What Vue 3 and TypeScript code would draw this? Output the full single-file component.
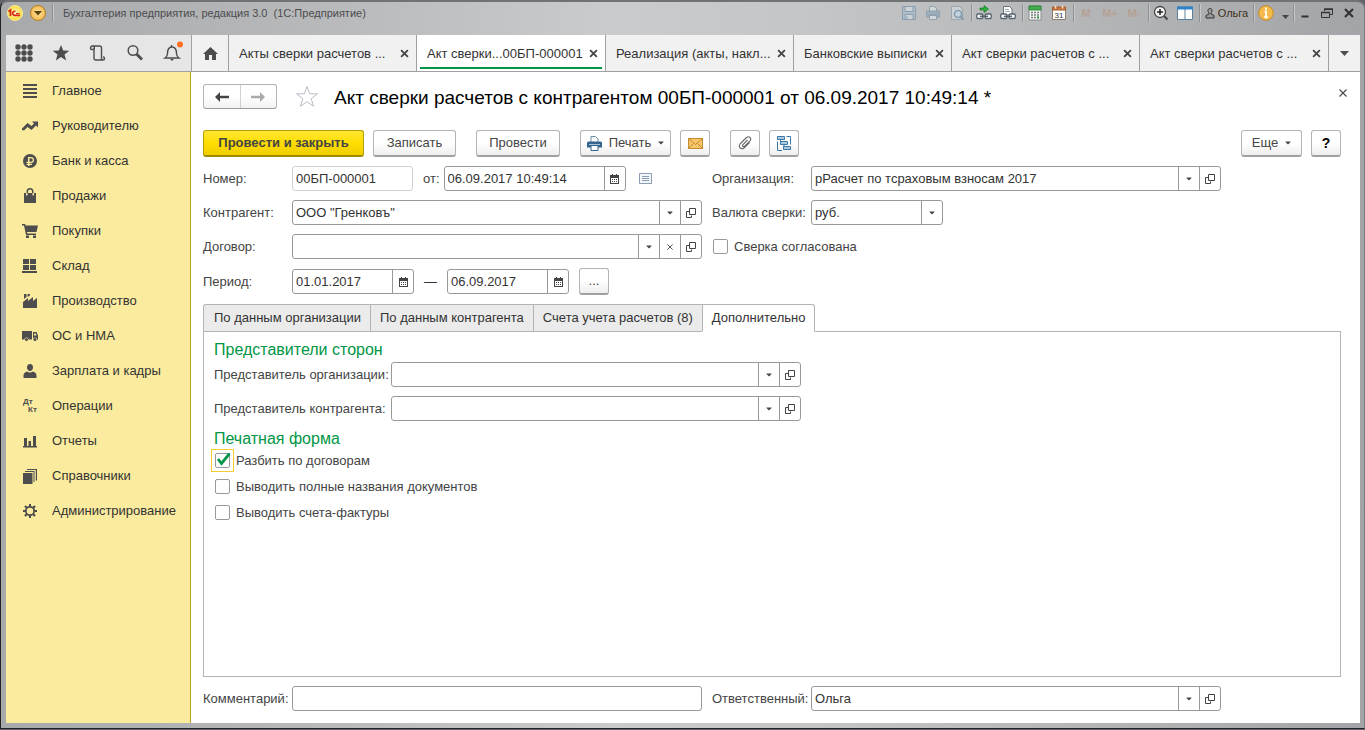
<script setup lang="ts">
import { ref } from 'vue'

interface Section { title: string; icon: string }
interface DocTab { title: string; width: number; active?: boolean }

const sections: Section[] = [
  { title: 'Главное', icon: 'M1 1h14v2H1zM1 5h14v2H1zM1 9h14v2H1zM1 13h14v2H1z' },
  { title: 'Руководителю', icon: 'M0 10.5L5.5 5l4 3L12 5.500 10 3.500h6v6l-2-2-4.500 4.500-4-3L2 12.500 0 12z' },
  { title: 'Банк и касса', icon: 'M8 1a7 7 0 1 0 0 14A7 7 0 0 0 8 1zM6 4h3a2.500 2.500 0 0 1 0 6H7.500v.8H10V12H7.500v1H6v-1H4.500v-1.200H6V10H4.500V8.800H6zM7.500 5.300v3.500H9a1.700 1.700 0 0 0 0-3.500z' },
  { title: 'Продажи', icon: 'M2 5h2v2.500h1.500V5h5v2.500H12V5h2v10H2zM4.500 5V3.500a3.500 3.500 0 0 1 7 0V5H10V3.500a2 2 0 0 0-4 0V5z' },
  { title: 'Покупки', icon: 'M0 1h3l.6 1.500H16L14.500 9H5l.3 1.500H14V12H4L2 2.500H0zM4 12.500h3v2.500H4zM11 12.500h3v2.500h-3z' },
  { title: 'Склад', icon: 'M1 1h6v5H1zM8 1h6v5H8zM1 7h6v5H1zM8 7h6v5H8zM0 13h15v2H0z' },
  { title: 'Производство', icon: 'M1 9l5-4v3l5-4v4l4-3v10H1zM2 1h2.500v3L2 6zM5.500 1H8v1.500L5.500 4z' },
  { title: 'ОС и НМА', icon: 'M0 3h10v8.500H6.500a2 2 0 0 0-4 0H0zM11 4h3.500L16 7.500v4h-1a2 2 0 0 0-4 0zM12 5.500v2h2.500l-.8-2zM3 11.500a1.500 1.500 0 1 1 3 0 1.500 1.500 0 0 1-3 0zM11.500 11.500a1.500 1.500 0 1 1 3 0 1.500 1.500 0 0 1-3 0z' },
  { title: 'Зарплата и кадры', icon: 'M8 1c2 0 3 1.400 3 3.300C11 6.500 9.700 8 8 8S5 6.500 5 4.300C5 2.400 6 1 8 1zM5 8.500Q8 10.500 11 8.500L13 9.500q1.500.8 1.500 3V15h-13v-2.500q0-2.200 1.500-3z' },
  { title: 'Операции', icon: '' },
  { title: 'Отчеты', icon: 'M1 13h14v1.500H1zM2 5h3v8H2zM6.500 8H9v5H6.500zM11 3h3v10h-3z' },
  { title: 'Справочники', icon: 'M1 5h9.500v11H1zM3 3h9.500v11h-1V4H3zM5 1h10v11.500h-1.200V2H5z' },
  { title: 'Администрирование', icon: 'M7 1h2v2l1.800.7L12.300 2.300l1.500 1.500-1.400 1.400L13 7h2v2h-2l-.7 1.800 1.500 1.500-1.500 1.500-1.500-1.500L9 13v2H7v-2l-1.800-.7-1.500 1.500-1.500-1.500 1.500-1.500L3 9H1V7h2l.7-1.800-1.500-1.400 1.500-1.500 1.500 1.400L7 3zM8 4.700a3.300 3.300 0 1 0 0 6.600 3.300 3.300 0 0 0 0-6.600z' },
]

const docTabs: DocTab[] = [
  { title: 'Акты сверки расчетов ...', width: 188 },
  { title: 'Акт сверки...00БП-000001', width: 189, active: true },
  { title: 'Реализация (акты, накл...', width: 188 },
  { title: 'Банковские выписки', width: 158 },
  { title: 'Акт сверки расчетов с ...', width: 188 },
  { title: 'Акт сверки расчетов с ...', width: 189 },
]

const pages = ['По данным организации', 'По данным контрагента', 'Счета учета расчетов (8)', 'Дополнительно']
const page = ref(3)

const docNumber = ref('00БП-000001')
const docDate = ref('06.09.2017 10:49:14')
const periodFrom = ref('01.01.2017')
const periodTo = ref('06.09.2017')
const comment = ref('')
const agreed = ref(false)
const options = ref([
  { label: 'Разбить по договорам', on: true },
  { label: 'Выводить полные названия документов', on: false },
  { label: 'Выводить счета-фактуры', on: false },
])
const representatives = ['Представитель организации:', 'Представитель контрагента:']
</script>

<template>
  <svg class="defs" aria-hidden="true">
    <symbol id="arrow" viewBox="0 0 6 4"><path d="M.5.500h5v.5L3 3.500.5 1z" fill="#444" /></symbol>
    <symbol id="open" viewBox="0 0 10 10"><path d="M3.500.500h6v6h-6zM3.500 3.500h-3v6h5v-2" fill="none" stroke="#444" /></symbol>
    <symbol id="calendar" viewBox="0 0 9 10"><path fill-rule="evenodd" fill="#444" d="M0 1h2V0h1v1h3V0h1v1h2v9H0zM1 4v5h7V4zM2 5h1v1H2zM4 5h1v1H4zM6 5h1v1H6zM2 7h1v1H2zM4 7h1v1H4zM6 7h1v1H6z" /></symbol>
    <symbol id="cross" viewBox="0 0 8 8"><path d="M1 1l6 6M7 1L1 7" fill="none" stroke="currentColor" stroke-width="1.600" /></symbol>
    <symbol id="thin-cross" viewBox="0 0 8 8"><path d="M.5.500l7 7M7.500.500l-7 7" fill="none" stroke="currentColor" stroke-width="1.100" /></symbol>
  </svg>
  <div class="window">
    <header class="titlebar">
      <svg class="logo" viewBox="0 0 16 16" aria-hidden="true">
        <defs>
          <radialGradient id="lg"><stop offset="0" stop-color="#fffbd0" /><stop offset="1" stop-color="#f9d92f" /></radialGradient>
        </defs>
        <circle cx="8" cy="8" r="7.500" fill="url(#lg)" stroke="#f7ef9a" />
        <path d="M1.500 6.500L3.500 5v6M8.500 6.500a2 2 0 1 0-1 3.800H13" fill="none" stroke="#d9251c" stroke-width="1.700" />
        <path d="M9 8.500h3.500" stroke="#d9251c" />
      </svg>
      <button class="main-menu" aria-label="Главное меню">
        <svg width="8" height="5" viewBox="0 0 8 5"><path d="M0 0h8L4 4.500z" fill="#5b4310" /></svg>
      </button>
      <i class="sep tall"></i>
      <span class="app-title">Бухгалтерия предприятия, редакция 3.0&nbsp; (1С:Предприятие)</span>
      <div class="tools">
        <button class="tool dim" aria-label="Сохранить"><svg viewBox="0 0 16 16"><path d="M1.500 1.500h13v13h-13z" fill="#a9bccb" stroke="#7591a8" /><path d="M4 1.500h8v5H4z" fill="#d5dee4" stroke="#7591a8" /><path d="M4 9.500h8v5H4z" fill="#d5dee4" stroke="#7591a8" /><path d="M6 11v3" stroke="#7591a8" /></svg></button>
        <button class="tool dim" aria-label="Печать"><svg viewBox="0 0 16 16"><path d="M4.500 6V1.500h5l2 2V6M4.500 10.500h7v4h-7z" fill="#dce2e6" stroke="#7f95a5" /><path d="M1.500 6h13v6H12v-2H4v2H1.500z" fill="#8fa7b9" stroke="#7f95a5" /></svg></button>
        <button class="tool dim" aria-label="Просмотр"><svg viewBox="0 0 16 16"><path d="M2.500 1.500h8l3 3v10h-11z" fill="#d3dae0" stroke="#8b9da9" /><circle cx="9" cy="9" r="3.500" fill="#c9dce8" stroke="#6f8fa6" stroke-width="1.500" /><path d="M11.500 11.500l3 3" stroke="#6f8fa6" stroke-width="2" /></svg></button>
        <i class="sep"></i>
        <button class="tool" aria-label="Перейти по ссылке"><svg viewBox="0 0 16 16"><path d="M4 3h4V.500L12.500 4 8 7.500V5H4z" fill="#2bb03a" stroke="#14762a" stroke-width=".7" /><rect x=".8" y="9" width="6" height="4.500" rx="1" fill="#fff" stroke="#56616c" stroke-width="1.300" /><rect x="9.200" y="9" width="6" height="4.500" rx="1" fill="#fff" stroke="#56616c" stroke-width="1.300" /><path d="M4 11.300h8" stroke="#56616c" stroke-width="1.500" /></svg></button>
        <button class="tool" aria-label="Получить ссылку"><svg viewBox="0 0 16 16"><path d="M3.500 9V1.500h6l2.500 2.500v5" fill="#fff" stroke="#66727e" /><path d="M5 4.500h4M5 6.500h5" stroke="#9aa6b0" /><rect x=".8" y="9" width="6" height="4.500" rx="1" fill="#fff" stroke="#56616c" stroke-width="1.300" /><rect x="9.200" y="9" width="6" height="4.500" rx="1" fill="#fff" stroke="#56616c" stroke-width="1.300" /><path d="M4 11.300h8" stroke="#56616c" stroke-width="1.500" /></svg></button>
        <i class="sep"></i>
        <button class="tool" aria-label="Калькулятор"><svg viewBox="0 0 16 16"><path d="M2 1h12v14H2z" fill="#fafafa" stroke="#8a8a8a" /><path d="M2 1h12v4H2z" fill="#43ad4b" stroke="#2f8a3a" /><path d="M4 7.500h8M4 10h8M4 12.500h8" stroke="#6e7f70" stroke-width="1.500" stroke-dasharray="2 1" /><path d="M10 12.500h2" stroke="#2f9a3a" stroke-width="2" /></svg></button>
        <button class="tool" aria-label="Календарь"><svg viewBox="0 0 16 16"><path d="M1.500 2.500h13v12h-13z" fill="#fff" stroke="#8c7a68" /><path d="M1.500 2h13v3h-13z" fill="#c9773f" stroke="#a65c2a" /><path d="M4.500.500v3M11.500.500v3" stroke="#f6e0cc" stroke-width="1.500" /><text x="8" y="13" text-anchor="middle" font-size="8" fill="#333">31</text></svg></button>
        <i class="sep"></i>
        <button class="tool mem">M</button>
        <button class="tool mem">M+</button>
        <button class="tool mem">M-</button>
        <i class="sep"></i>
        <button class="tool" aria-label="Масштаб"><svg viewBox="0 0 16 16"><circle cx="7" cy="7" r="5.500" fill="#f3f3f3" stroke="#444" stroke-width="1.300" /><path d="M4 7h6M7 4v6" stroke="#222" stroke-width="1.500" /><path d="M11 11l3.500 3.500" stroke="#444" stroke-width="2" /></svg></button>
        <button class="tool" aria-label="Разделить окно"><svg viewBox="0 0 16 16"><path d="M.5 2h15v12.500H.5zM8 3v11" fill="#fff" stroke="#5c7f9c" /><path d="M0 1.500h16v3H0z" fill="#2f83c8" /></svg></button>
        <i class="sep"></i>
        <button class="user">
          <svg width="10" height="11" viewBox="0 0 10 11" aria-hidden="true"><path d="M5 .5c2.500 0 2.500 3 1 4.500v1L9 7.500V10H1V7.500L4 6V5C2.500 3.500 2.500.500 5 .5z" fill="#999" stroke="#333" /></svg>
          Ольга
        </button>
        <i class="sep near"></i>
        <button class="tool" aria-label="Информация"><svg viewBox="0 0 16 16"><circle cx="8" cy="8" r="7.300" fill="#f5b94b" stroke="#c58a26" /><path d="M8 2.500v2.300M6.500 6.500H8V12M6 12.200h4" fill="none" stroke="#fff8e4" stroke-width="2" /></svg></button>
        <button class="narrow" aria-label="Ещё"><svg width="7" height="4" viewBox="0 0 7 4"><path d="M0 0h7L3.500 4z" fill="#444" /></svg></button>
        <i class="sep near"></i>
        <button class="win" aria-label="Свернуть"><svg viewBox="0 0 12 12"><path d="M2.500 9.500h7" stroke="#333" stroke-width="2" /></svg></button>
        <button class="win" aria-label="Восстановить"><svg viewBox="0 0 12 12"><path d="M3.500 4V2.500h8v5H9" fill="none" stroke="#333" /><path d="M3 2h9" stroke="#333" stroke-width="1.500" /><path d="M.5 5.500h8v5h-8z" fill="none" stroke="#333" /><path d="M0 5.500h9" stroke="#333" stroke-width="1.500" /></svg></button>
        <button class="win" aria-label="Закрыть окно"><svg viewBox="0 0 12 12"><path d="M2 2l8 8M10 2l-8 8" stroke="#333" stroke-width="2.200" /></svg></button>
      </div>
    </header>

    <div class="strip">
      <div class="quick">
        <button aria-label="Функции"><svg viewBox="0 0 18 18" fill="#4d4d4d"><template v-for="y in 3" :key="y"><circle v-for="x in 3" :key="x" :cx="x * 6 - 3" :cy="y * 6 - 3" r="2.700" /></template></svg></button>
        <button aria-label="Избранное"><svg viewBox="0 0 18 18"><path d="M9 1l2.200 5.600 6.100.2-4.800 3.700 1.700 5.900L9 13l-5.200 3.400 1.700-5.900L.7 6.800l6.100-.2z" fill="#4d4d4d" /></svg></button>
        <button aria-label="История"><svg viewBox="0 0 18 18"><path d="M4.500 5.500H2.500q-1 0-1-1.500t1.500-2h7.500q2 0 2 2v10q0 2 1.500 2t1.500-1.500-1.500-1.500M4.500 5.500q1.500-.5.500-3M5 4v10q0 2 2 2h7" fill="none" stroke="#4d4d4d" stroke-width="1.400" /></svg></button>
        <button aria-label="Поиск"><svg viewBox="0 0 18 18"><circle cx="7" cy="6.500" r="4.800" fill="none" stroke="#4d4d4d" stroke-width="1.500" /><path d="M10.500 10l5.500 5.500" stroke="#4d4d4d" stroke-width="2.800" /></svg></button>
        <button aria-label="Оповещения"><svg viewBox="0 0 18 18"><path d="M8.500 1v2c-4 .5-4 4-4 6.500 0 2-1 3.500-2.500 4.500h14c-1.500-1-2.500-2.500-2.500-4.500 0-2.500 0-6-4-6.500h-1" fill="none" stroke="#4d4d4d" stroke-width="1.400" /><path d="M7 15h4l-2 2z" fill="#4d4d4d" /><circle cx="17" cy=".5" r="3" fill="#ff6f1e" /></svg></button>
      </div>
      <nav class="doc-tabs" aria-label="Открытые окна">
        <button class="home" aria-label="Начальная страница"><svg width="15" height="13" viewBox="0 0 15 13"><path d="M7.500 0L15 7h-2v6H9V8H6v5H2V7H0z" fill="#4d4d4d" /></svg></button>
        <div v-for="(tab, i) in docTabs" :key="i" class="doc-tab" :class="{ active: tab.active }" :style="{ flexBasis: tab.width + 'px' }">
          <button class="doc-name">{{ tab.title }}</button>
          <button class="doc-close" aria-label="Закрыть"><svg width="9" height="9"><use href="#cross" /></svg></button>
        </div>
        <button class="more-tabs" aria-label="Список окон"><svg width="9" height="5" viewBox="0 0 9 5"><path d="M0 0h9L4.500 5z" fill="#4d4d4d" /></svg></button>
      </nav>
    </div>

    <div class="body">
      <nav class="sidebar" aria-label="Разделы">
        <a v-for="s in sections" :key="s.title" href="#">
          <svg width="16" height="16" viewBox="0 0 16 16" aria-hidden="true">
            <path v-if="s.icon" :d="s.icon" fill="#4d4d4d" fill-rule="evenodd" />
            <template v-else>
              <text x="1" y="6" class="dk">Дт</text>
              <text x="6" y="14" class="dk">Кт</text>
            </template>
          </svg>
          {{ s.title }}
        </a>
      </nav>

      <main class="doc">
        <div class="heading">
          <div class="history">
            <button aria-label="Назад"><svg width="14" height="10" viewBox="0 0 14 10"><path d="M0 5l5-5v3.700h9v2.600H5V10z" fill="#444" /></svg></button>
            <button aria-label="Вперед"><svg width="14" height="10" viewBox="0 0 14 10"><path d="M14 5L9 0v3.700H0v2.600h9V10z" fill="#aaa" /></svg></button>
          </div>
          <button class="star" aria-label="В избранное"><svg width="24" height="23" viewBox="0 0 24 23"><path d="M12 1.500l2.600 7.200 7.900.2-6.300 4.700 2.400 7.700-6.600-4.600-6.600 4.600 2.400-7.700-6.300-4.700 7.900-.2z" fill="#fff" stroke="#b9bec6" /></svg></button>
          <h1>Акт сверки расчетов с контрагентом 00БП-000001 от 06.09.2017 10:49:14 *</h1>
          <button class="close-doc" aria-label="Закрыть"><svg width="8" height="8"><use href="#thin-cross" /></svg></button>
        </div>

        <div class="commands">
          <button class="btn primary">Провести и закрыть</button>
          <button class="btn save">Записать</button>
          <button class="btn post apart">Провести</button>
          <button class="btn print apart">
            <svg width="15" height="15" viewBox="0 0 15 15" aria-hidden="true"><path d="M4 6V.500h4.500L11 3v3" fill="#fff" stroke="#6d8aa3" /><path d="M0 7q0-1.500 1.500-1.500h12Q15 5.500 15 7v4.500H0z" fill="#34648c" /><path d="M2 8.500h11" stroke="#a9c2d6" /><path d="M4 9.500h7v5H4z" fill="#fff" stroke="#34648c" /></svg>
            Печать
            <svg width="6" height="4"><use href="#arrow" /></svg>
          </button>
          <button class="btn icon" aria-label="Отправить по почте"><svg width="15" height="11" viewBox="0 0 15 11"><path d="M.5.500h14v10H.5z" fill="#f7c66a" stroke="#c58a2c" /><path d="M.5.500l7 6 7-6M.5 10.500l5-5M14.500 10.500l-5-5" fill="none" stroke="#c58a2c" /></svg></button>
          <button class="btn icon apart" aria-label="Присоединенные файлы"><svg width="14" height="14" viewBox="0 0 14 14"><path d="M9.500 4L5 8.500q-1 1.500 0 2t2-.5l5-5q1.500-2 0-3.500t-3.500 0L2.500 7.500q-2 2.300-.5 4.200t4 .3L11.500 6.500" fill="none" stroke="#666" stroke-width="1.100" /></svg></button>
          <button class="btn icon" aria-label="Структура подчиненности"><svg width="15" height="15" viewBox="0 0 15 15" fill="#aac8de" stroke="#3a78a8"><path d="M3.500 3.500v3h1M7 9v3.500h1M9.500.500h4v8M.5 5.500v9H5" fill="none" /><path d="M.5.500h7v3h-7zM3.500 5.500h7v3h-7zM6.500 10.500h7v3h-7z" /></svg></button>
          <button class="btn more">Еще <svg width="6" height="4"><use href="#arrow" /></svg></button>
          <button class="btn icon help">?</button>
        </div>

        <div class="form">
          <div class="row">
            <label class="cap" for="num">Номер:</label>
            <div class="field num"><input id="num" v-model="docNumber"></div>
            <label class="cap-inline" for="date">от:</label>
            <div class="field date"><input id="date" v-model="docDate"><button class="cell" aria-label="Выбрать дату"><svg width="9" height="10"><use href="#calendar" /></svg></button></div>
            <svg class="list-icon" width="13" height="11" viewBox="0 0 13 11" aria-hidden="true"><path d="M.5.500h12v10H.5z" fill="#f3f7fa" stroke="#8b9db3" /><path d="M3 3.500h7M3 5.500h7M3 7.500h7" stroke="#8b9db3" /></svg>
          </div>
          <div class="row">
            <label class="cap right" for="org">Организация:</label>
            <div class="field wide">
              <div class="choice"><select id="org"><option>рРасчет по тсраховым взносам 2017</option></select><span class="drop"><svg width="6" height="4"><use href="#arrow" /></svg></span></div>
              <button class="cell" aria-label="Открыть"><svg width="10" height="10"><use href="#open" /></svg></button>
            </div>
          </div>

          <div class="row">
            <label class="cap" for="partner">Контрагент:</label>
            <div class="field wide">
              <div class="choice"><select id="partner"><option>ООО "Гренковъ"</option></select><span class="drop"><svg width="6" height="4"><use href="#arrow" /></svg></span></div>
              <button class="cell" aria-label="Открыть"><svg width="10" height="10"><use href="#open" /></svg></button>
            </div>
          </div>
          <div class="row">
            <label class="cap right" for="cur">Валюта сверки:</label>
            <div class="field currency">
              <div class="choice"><select id="cur"><option>руб.</option></select><span class="drop"><svg width="6" height="4"><use href="#arrow" /></svg></span></div>
            </div>
          </div>

          <div class="row">
            <label class="cap" for="contract">Договор:</label>
            <div class="field wide">
              <div class="choice"><select id="contract"><option></option></select><span class="drop"><svg width="6" height="4"><use href="#arrow" /></svg></span></div>
              <button class="cell" aria-label="Очистить"><svg width="6" height="6"><use href="#thin-cross" /></svg></button>
              <button class="cell" aria-label="Открыть"><svg width="10" height="10"><use href="#open" /></svg></button>
            </div>
          </div>
          <label class="row check"><input v-model="agreed" type="checkbox">Сверка согласована</label>

          <div class="row with-button">
            <label class="cap" for="from">Период:</label>
            <div class="field period"><input id="from" v-model="periodFrom"><button class="cell" aria-label="Выбрать дату"><svg width="9" height="10"><use href="#calendar" /></svg></button></div>
            <label class="dash" for="to">—</label>
            <div class="field period"><input id="to" v-model="periodTo"><button class="cell" aria-label="Выбрать дату"><svg width="9" height="10"><use href="#calendar" /></svg></button></div>
            <button class="btn icon dots">...</button>
          </div>
        </div>

        <div class="pages" role="tablist">
          <button v-for="(p, i) in pages" :key="p" role="tab" :aria-selected="page === i" :class="{ current: page === i }" @click="page = i">{{ p }}</button>
        </div>
        <section class="panel">
          <h2>Представители сторон</h2>
          <div class="reps">
            <div v-for="(r, i) in representatives" :key="r" class="row">
              <label class="cap rep" :for="'rep' + i">{{ r }}</label>
              <div class="field wide">
                <div class="choice"><select :id="'rep' + i"><option></option></select><span class="drop"><svg width="6" height="4"><use href="#arrow" /></svg></span></div>
                <button class="cell" aria-label="Открыть"><svg width="10" height="10"><use href="#open" /></svg></button>
              </div>
            </div>
          </div>
          <h2>Печатная форма</h2>
          <div class="options">
            <label v-for="o in options" :key="o.label" class="check" :class="{ focused: o.on }">
              <span class="box">
                <input v-model="o.on" type="checkbox">
                <svg v-if="o.on" width="15" height="15" viewBox="0 0 15 15" aria-hidden="true"><path d="M3 6l3.500 4.500L15 0" fill="none" stroke="#009646" stroke-width="2.800" /></svg>
              </span>
              {{ o.label }}
            </label>
          </div>
        </section>

        <footer class="form">
          <div class="row">
            <label class="cap" for="comment">Комментарий:</label>
            <div class="field wide"><input id="comment" v-model="comment"></div>
          </div>
          <div class="row">
            <label class="cap right" for="resp">Ответственный:</label>
            <div class="field wide">
              <div class="choice"><select id="resp"><option>Ольга</option></select><span class="drop"><svg width="6" height="4"><use href="#arrow" /></svg></span></div>
              <button class="cell" aria-label="Открыть"><svg width="10" height="10"><use href="#open" /></svg></button>
            </div>
          </div>
        </footer>
      </main>
    </div>
  </div>
</template>

<style>
html, body { height: 100%; }
body { margin: 0; background: #5f646c; }
#app { display: flex; flex-direction: column; height: 100%; }
</style>

<style scoped>
* { box-sizing: border-box; }
.defs { position: absolute; width: 0; height: 0; }
button, input, select { font: inherit; color: inherit; margin: 0; padding: 0; border: 0; background: none; }
button { display: flex; align-items: center; justify-content: center; white-space: nowrap; }
button, a { cursor: pointer; }

.window {
  display: flex; flex-direction: column; flex: 1; margin-bottom: 1px;
  padding: 0 4px 5px 5px; border: 1px solid #77787a; border-top: 2px solid #717274; border-left-color: #222; border-bottom-color: #222;
  border-radius: 8px 8px 0 0;
  background: linear-gradient(90deg, #a8a9ab 0, #b9babc 25%, #cacbcc 45%, #c4c5c6 60%, #b0b1b3 85%, #a3a4a7 100%);
  font: 13px/16px "Liberation Sans", Arial, sans-serif; color: #333;
}

.titlebar { display: flex; align-items: center; height: 33px; padding-bottom: 11px; color: #444; font-size: 11px; }
.logo { width: 16px; height: 16px; margin-left: 1px; }
.main-menu { width: 16px; height: 16px; margin-left: 7px; border: 1px solid #b47f22; border-radius: 50%; background: radial-gradient(#ffe29a, #f1ad3a); }
.sep { width: 1px; height: 18px; margin-left: 2px; background: #8f9092; box-shadow: 1px 0 #c6c7c8; }
.sep.near { margin-left: 0; }
.sep.tall { margin-left: 6px; }
.app-title { flex: 1; margin-left: 10px; color: #4b4c4e; white-space: nowrap; overflow: hidden; }
.tools { display: flex; align-items: center; }
.tool { width: 24px; height: 20px; }
.tool svg { width: 16px; height: 16px; }
.dim svg { opacity: .7; }
.mem { color: #b5a195; font-weight: bold; }
.user { width: 53px; gap: 3px; color: #3f3018; }
.narrow { width: 15px; height: 20px; align-items: flex-end; padding-bottom: 4px; }
.win { width: 22px; height: 20px; }
.win svg { width: 12px; height: 12px; }

.strip { display: flex; height: 37px; border-bottom: 1px solid #a0a0a0; background: #f1f1f1; }
.quick { display: flex; flex: none; width: 186px; padding-right: 1px; border-right: 1px solid #a0a0a0; background: #e6e6e6; }
.quick button { flex: 1; }
.quick svg { width: 18px; height: 18px; overflow: visible; }
.doc-tabs { display: flex; flex: 1; min-width: 0; }
.home { width: 37px; border-right: 1px solid #a0a0a0; }
.doc-tab { display: flex; align-items: center; min-width: 0; padding: 0 7px 0 10px; border-right: 1px solid #a0a0a0; }
.doc-tab.active { background: linear-gradient(#009646, #009646) center bottom 2px / calc(100% - 6px) 2px no-repeat #fff; }
.doc-name { flex: 1; min-width: 0; padding-top: 2px; overflow: hidden; justify-content: flex-start; }
.doc-close { color: #444; }
.more-tabs { flex: 1; }

.body { display: flex; flex: 1; background: #fff; }
.sidebar { display: flex; flex-direction: column; flex: none; width: 185px; padding-top: 1px; border-right: 1px solid #b9a416; background: #fbeb9e; }
.sidebar a { display: flex; align-items: center; gap: 14px; height: 35px; padding-left: 16px; color: #333; text-decoration: none; white-space: nowrap; }
.dk { font-size: 8px; font-weight: bold; fill: #4d4d4d; }

.doc { display: flex; flex-direction: column; flex: 1; min-width: 0; padding: 12px 19px 12px 12px; }
.heading { display: flex; align-items: center; height: 25px; }
.history { display: flex; width: 74px; height: 25px; border: 1px solid #b4b4b4; border-bottom-color: #999; border-radius: 3px; background: linear-gradient(#fff 50%, #f1f1f1); }
.history button { flex: 1; }
.history button + button { border-left: 1px solid #d0d0d0; }
.star { margin-left: 18px; }
h1 { flex: 1; margin: 0 0 0 15px; padding-top: 2px; font-size: 19px; line-height: 24px; font-weight: normal; color: #000; white-space: nowrap; }
.close-doc { width: 16px; height: 16px; margin: 0 -10px 8px 0; color: #444; }

.commands { display: flex; gap: 9px; margin-top: 21px; }
.btn { height: 27px; border: 1px solid #b4b4b4; border-bottom: 2px solid #a0a0a0; border-radius: 3px; background: linear-gradient(#fff 50%, #eee); color: #444; }
.btn.primary { width: 161px; border-color: #b59f00; border-bottom-color: #a08c00; background: linear-gradient(#ffe733, #ffdd00 50%, #f0ce00); font-weight: bold; }
.save { width: 83px; }
.post { width: 84px; }
.apart { margin-left: 11px; }
.print { width: 91px; gap: 7px; }
.icon { flex: none; width: 30px; }
.more { width: 61px; margin-left: auto; gap: 7px; }
.help { color: #000; font-weight: bold; font-size: 14px; }

.form { display: grid; grid-template-columns: minmax(0, 499px) minmax(0, 509px); column-gap: 10px; row-gap: 9px; margin-top: 9px; }
.row { display: flex; align-items: center; min-width: 0; height: 25px; }
.with-button { height: 27px; }
.cap { flex: none; width: 89px; color: #444; white-space: nowrap; }
.cap.right { width: 99px; }
.cap.rep { width: 177px; }
.cap-inline { margin: 0 4px 0 10px; color: #444; }
.field { display: flex; height: 25px; border: 1px solid #999; border-radius: 3px; background: #fff; }
.field input { flex: 1; width: 0; min-width: 0; padding: 0 3px; }
.wide { flex: 0 1 410px; }
.num { width: 121px; border-color: #d2d2d2; }
.date { width: 182px; }
.period { width: 122px; }
.currency { width: 132px; }
.cell, .drop { display: flex; align-items: center; justify-content: center; width: 21px; border-left: 1px solid #999; }
.choice { display: grid; flex: 1; grid-template-columns: 1fr 21px; }
.choice select { grid-area: 1 / 1 / 2 / 3; min-width: 0; padding: 0 24px 0 3px; appearance: none; }
.drop { grid-area: 1 / 2 / 2 / 3; pointer-events: none; }
.list-icon { margin-left: 13px; }
.dash { width: 33px; text-align: center; }
.dots { margin-left: 10px; }
.check { display: flex; align-items: center; gap: 6px; color: #444; }
.check input { appearance: none; width: 15px; height: 15px; border: 1px solid #999; border-radius: 2px; background: #fff; }
.check.row { padding-left: 1px; }

.pages { display: flex; height: 28px; margin: 9px 0 -1px; z-index: 1; }
.pages button { padding: 0 9px; border: 1px solid #b4b4b4; border-right: 0; background: #ebebeb; }
.pages button:first-child { padding-left: 10px; border-radius: 3px 0 0 0; }
.pages button.current { border-right: 1px solid #b4b4b4; border-bottom-color: #fff; border-radius: 0 3px 0 0; background: #fff; }
.panel { flex: 1; padding: 8px 10px; border: 1px solid #b4b4b4; }
h2 { margin: 0; font-size: 16px; line-height: 20px; font-weight: normal; color: #009646; }
.reps { display: flex; flex-direction: column; gap: 9px; margin: 2px 0 8px; }
.options { display: flex; flex-direction: column; gap: 3px; }
.options .check { height: 23px; gap: 2px; }
.box { display: grid; flex: none; place-items: center; width: 23px; height: 23px; margin-left: -3px; border: 1px solid transparent; }
.box > * { grid-area: 1 / 1; }
.box svg { pointer-events: none; }
.focused .box { border-color: #f5cb2e; }
</style>
